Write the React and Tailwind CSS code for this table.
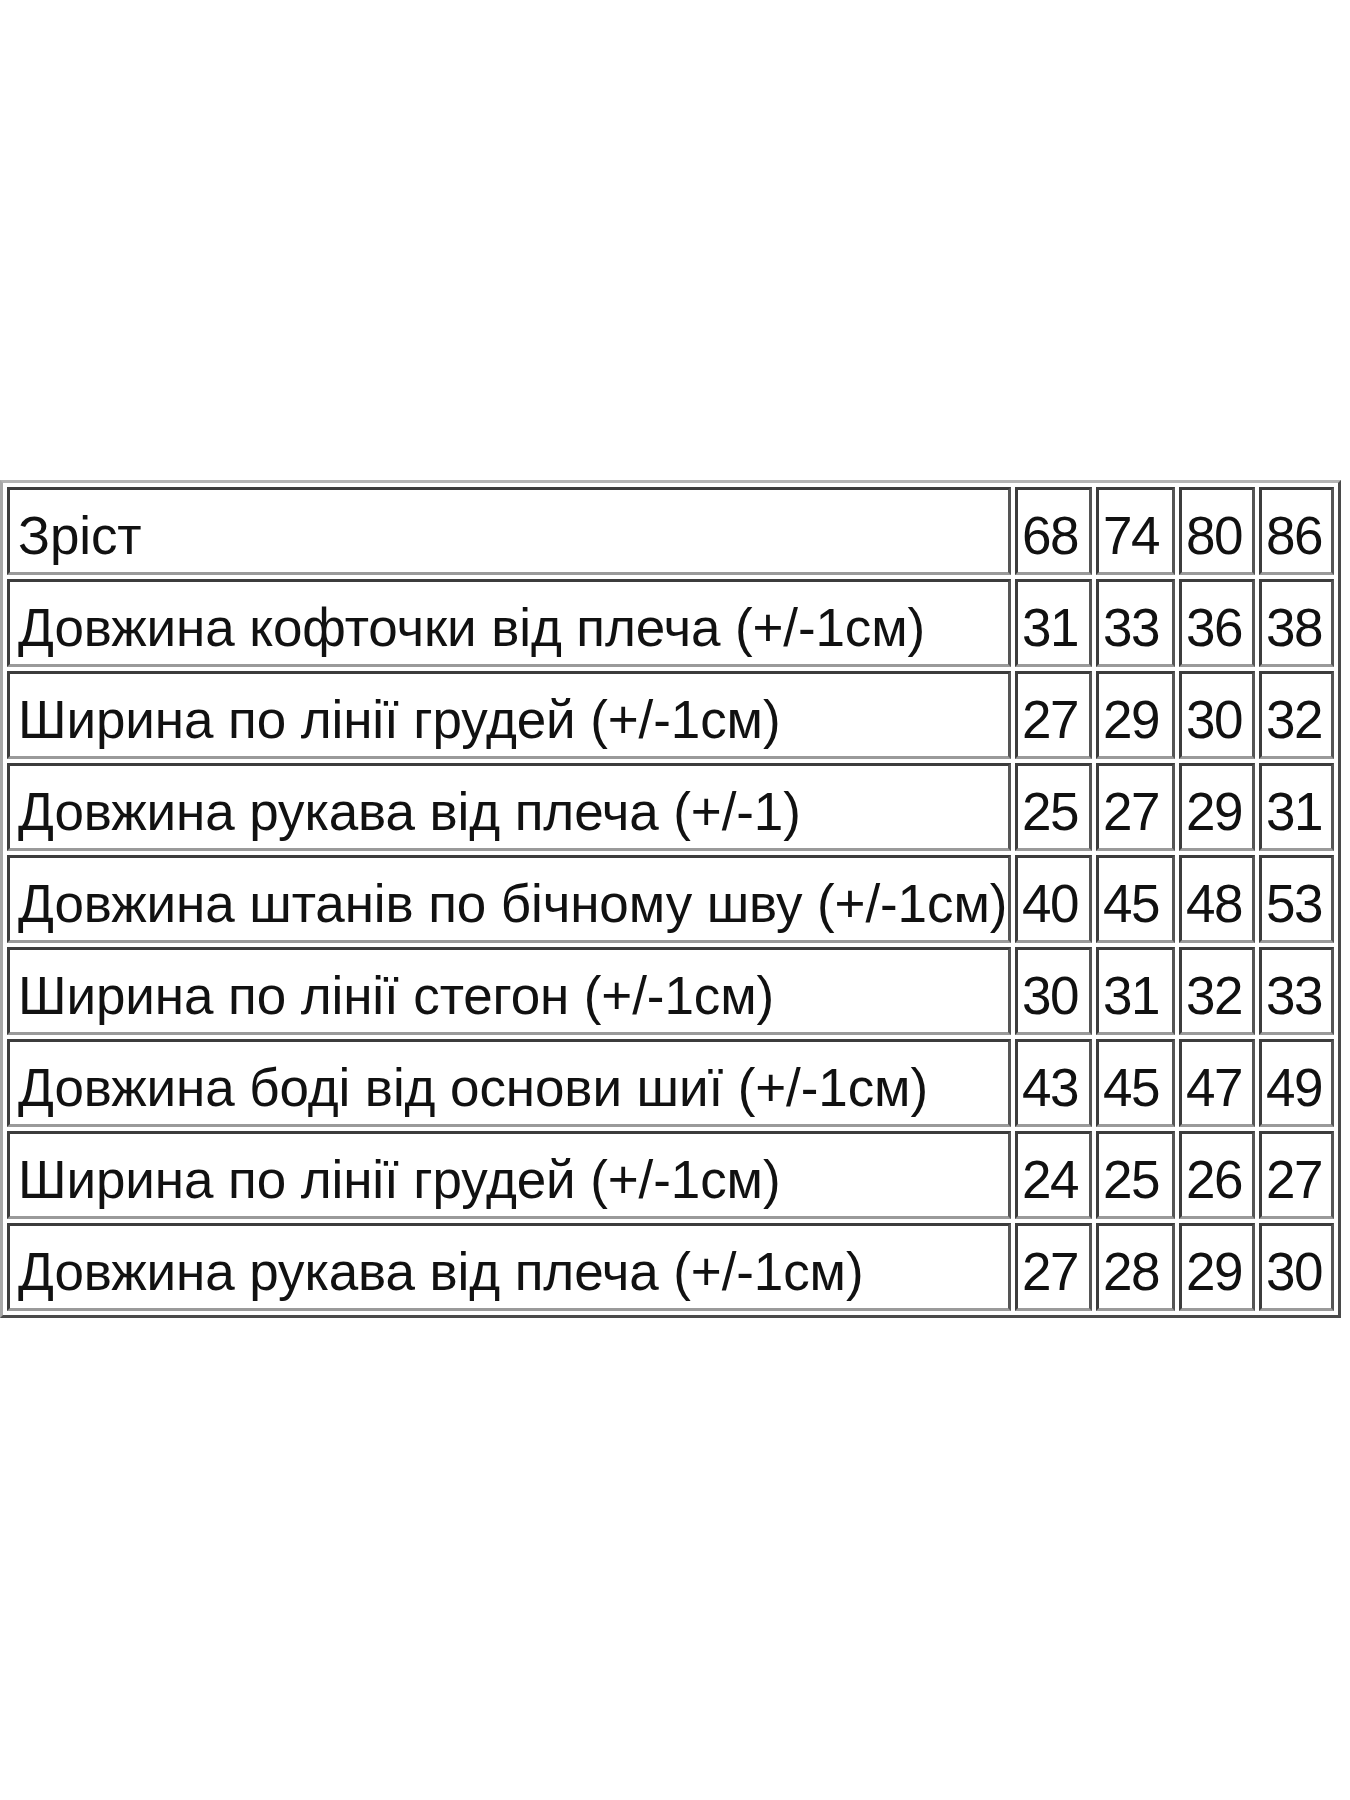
const rows = [
  ["Зріст", "68", "74", "80", "86"],
  ["Довжина кофточки від плеча (+/-1см)", "31", "33", "36", "38"],
  ["Ширина по лінії грудей (+/-1см)", "27", "29", "30", "32"],
  ["Довжина рукава від плеча (+/-1)", "25", "27", "29", "31"],
  ["Довжина штанів по бічному шву (+/-1см)", "40", "45", "48", "53"],
  ["Ширина по лінії стегон (+/-1см)", "30", "31", "32", "33"],
  ["Довжина боді від основи шиї (+/-1см)", "43", "45", "47", "49"],
  ["Ширина по лінії грудей (+/-1см)", "24", "25", "26", "27"],
  ["Довжина рукава від плеча (+/-1см)", "27", "28", "29", "30"],
];

const colWidths = ["w-[1004px]", "w-[77px]", "w-[79px]", "w-[76px]", "w-[75px]"];

export default function App() {
  return (
    <div className="min-h-[1800px] w-[1350px] bg-white pt-[480px] font-['Liberation_Sans',Arial,sans-serif] text-[#111]">
      <table className="w-[1341px] table-fixed border-separate border-spacing-[4px] border-[3px] border-t-[#b4b4b4] border-l-[#a8a8a8] border-r-[#4a4a4a] border-b-[#4a4a4a]">
        <colgroup>
          {colWidths.map((w, i) => (
            <col key={i} className={w} />
          ))}
        </colgroup>
        <tbody>
          {rows.map((row, r) => (
            <tr key={r}>
              {row.map((cell, c) => (
                <td
                  key={c}
                  className={
                    "h-[88px] border-[3px] border-t-[#3c3c3c] border-l-[#3c3c3c] border-r-[#555] border-b-[#9a9a9a] pt-[8px] align-middle whitespace-nowrap text-[53px] leading-none " +
                    (c === 0 ? "pl-[8px] tracking-[-0.1px]" : "pl-[4px] tracking-[-1.5px]")
                  }
                >
                  {cell}
                </td>
              ))}
            </tr>
          ))}
        </tbody>
      </table>
    </div>
  );
}
